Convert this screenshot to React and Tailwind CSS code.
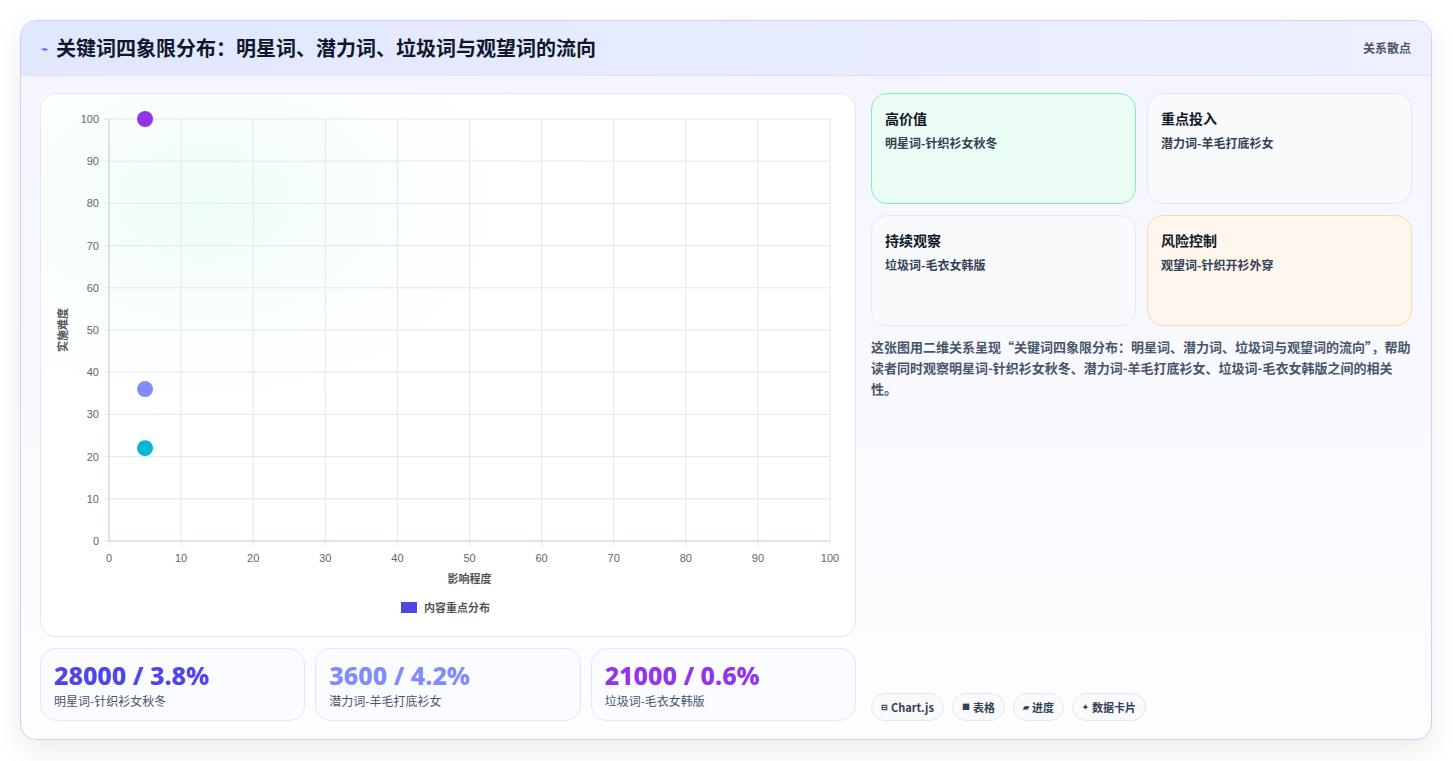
import React from "react";

const F = { fontFamily: '"Noto Sans CJK SC","Noto Sans",sans-serif' };

function Chart() {
  const x0 = 68, x1 = 789, y0 = 25, y1 = 447;
  const xs = (v) => x0 + ((x1 - x0) * v) / 100;
  const ys = (v) => y1 - ((y1 - y0) * v) / 100;
  const ticks = [0, 10, 20, 30, 40, 50, 60, 70, 80, 90, 100];
  return (
    <svg width="815" height="543" className="block">
      <defs>
        <radialGradient id="g" cx="0.2" cy="0.2" r="0.5">
          <stop offset="0" stopColor="#ecfdf5" stopOpacity="0.9" />
          <stop offset="1" stopColor="#ffffff" stopOpacity="0" />
        </radialGradient>
      </defs>
      <rect width="815" height="543" fill="url(#g)" />
      {ticks.map((t) => (
        <g key={t}>
          <line x1={xs(t)} x2={xs(t)} y1={y0} y2={y1 + 5} stroke="#e2e8f0" />
          <line x1={x0 - 5} x2={x1} y1={ys(t)} y2={ys(t)} stroke="#e2e8f0" />
          <text x={xs(t)} y={y1 + 21} fontSize="11" fill="#666" textAnchor="middle" fontFamily="Liberation Sans, sans-serif">{t}</text>
          <text x={x0 - 10} y={ys(t) + 4} fontSize="11" fill="#666" textAnchor="end" fontFamily="Liberation Sans, sans-serif">{t}</text>
        </g>
      ))}
      <line x1={x0} x2={x0} y1={y0} y2={y1} stroke="#cbd5e1" />
      <line x1={x0} x2={x1} y1={y1} y2={y1} stroke="#cbd5e1" />
      <text x={(x0 + x1) / 2} y={y1 + 42} fontSize="11" fontWeight="700" fill="#555" textAnchor="middle" style={F}>影响程度</text>
      <text transform={`translate(26 ${(y0 + y1) / 2}) rotate(-90)`} fontSize="11" fontWeight="700" fill="#555" textAnchor="middle" style={F}>实施难度</text>
      <circle cx={xs(5)} cy={ys(100)} r="8" fill="#9333ea" />
      <circle cx={xs(5)} cy={ys(36)} r="8" fill="#818cf8" />
      <circle cx={xs(5)} cy={ys(22)} r="8" fill="#06b6d4" />
      <rect x="360" y="508" width="16" height="11" fill="#4f46e5" />
      <text x="383" y="518" fontSize="11" fontWeight="700" fill="#555" style={F}>内容重点分布</text>
    </svg>
  );
}

const Stat = ({ v, l, c }) => (
  <div className="flex-1 rounded-2xl border border-[#dbeafe] bg-[#fafcff] px-[13px] pt-[10px] h-[73px]">
    <div className={`text-[25px] font-extrabold leading-[32px] ${c}`} style={{ fontFamily: '"Noto Sans",sans-serif' }}>{v}</div>
    <div className="text-[12px] text-[#475569] mt-[1px]">{l}</div>
  </div>
);

const Quad = ({ t, s, cls }) => (
  <div className={`rounded-2xl border px-[13px] pt-[14px] h-[111px] ${cls}`}>
    <div className="text-[14px] font-bold text-[#0f172a]">{t}</div>
    <div className="text-[12px] font-semibold text-[#334155] mt-[5px]">{s}</div>
  </div>
);

const Chip = ({ i, t }) => (
  <div className="h-[28px] rounded-full border border-[#e2e8f0] bg-[#f8fafc] px-[9px] flex items-center gap-[3px] text-[11px] font-bold text-[#334155]">
    <span className="text-[8px]">{i}</span>{t}
  </div>
);

export default function App() {
  return (
    <div className="w-[1453px] h-[761px] bg-white p-[20px]" style={F}>
      <div className="w-[1412px] h-[720px] rounded-2xl border border-[#c7d2fe] overflow-hidden shadow-[0_10px_30px_rgba(0,0,0,0.08)] bg-gradient-to-b from-[#f3f4ff] to-[#fefeff] flex flex-col">
        <div className="h-[55px] shrink-0 flex items-center justify-between px-[20px] bg-gradient-to-r from-[#e0e7ff] to-[#eef0ff] border-b border-[#dfe3f5]">
          <div className="flex items-center gap-[8px]">
            <span className="text-[#4f46e5] text-[12px]">⌁</span>
            <span className="text-[20px] font-bold text-[#0f172a]">关键词四象限分布：明星词、潜力词、垃圾词与观望词的流向</span>
          </div>
          <span className="text-[12px] font-semibold text-[#475569]">关系散点</span>
        </div>
        <div className="flex gap-[15px] px-[19px] pt-[17px] pb-[18px] flex-1">
          <div className="w-[816px] flex flex-col gap-[11px]">
            <div className="h-[544px] rounded-2xl border border-[#e2e8f0] bg-white overflow-hidden">
              <Chart />
            </div>
            <div className="flex gap-[10px]">
              <Stat v="28000 / 3.8%" l="明星词-针织衫女秋冬" c="text-[#4f46e5]" />
              <Stat v="3600 / 4.2%" l="潜力词-羊毛打底衫女" c="text-[#818cf8]" />
              <Stat v="21000 / 0.6%" l="垃圾词-毛衣女韩版" c="text-[#9333ea]" />
            </div>
          </div>
          <div className="flex-1 flex flex-col">
            <div className="grid grid-cols-2 gap-[11px]">
              <Quad t="高价值" s="明星词-针织衫女秋冬" cls="border-[#86efac] bg-[#ecfdf5]" />
              <Quad t="重点投入" s="潜力词-羊毛打底衫女" cls="border-[#e2e8f0] bg-[#f8fafc]" />
              <Quad t="持续观察" s="垃圾词-毛衣女韩版" cls="border-[#dbeafe] bg-[#f8fafc]" />
              <Quad t="风险控制" s="观望词-针织开衫外穿" cls="border-[#fcd9a8] bg-[#fff7ed]" />
            </div>
            <p className="mt-[10px] text-[13px] leading-[21px] font-semibold text-[#475569]">
              这张图用二维关系呈现“关键词四象限分布：明星词、潜力词、垃圾词与观望词的流向”，帮助读者同时观察明星词-针织衫女秋冬、潜力词-羊毛打底衫女、垃圾词-毛衣女韩版之间的相关性。
            </p>
            <div className="mt-auto flex gap-[8px]">
              <Chip i="⊟" t="Chart.js" />
              <Chip i="■" t="表格" />
              <Chip i="▰" t="进度" />
              <Chip i="✦" t="数据卡片" />
            </div>
          </div>
        </div>
      </div>
    </div>
  );
}
